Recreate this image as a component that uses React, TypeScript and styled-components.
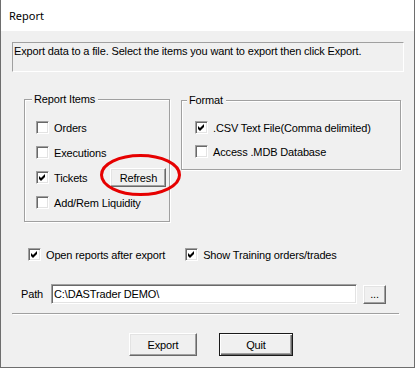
import React from 'react'
import styled, { createGlobalStyle } from 'styled-components'

const GlobalStyle = createGlobalStyle`
  html, body {
    margin: 0;
    padding: 0;
    background: #f0f0f0;
  }
`;

const Window = styled.div`
  width: 415px;
  height: 368px;
  box-sizing: border-box;
  display: flex;
  flex-direction: column;
  border: 1px solid #6e6e6e;
  border-top: none;
  background: #f0f0f0;
`;

const TitleBar = styled.div`
  flex: none;
  height: 31px;
  display: flex;
  align-items: center;
  padding-left: 8px;
  background: #fff;
  font-family: "Noto Sans", sans-serif;
  font-size: 11px;
  color: #000;
`;

const Client = styled.div`
  flex: 1;
  display: flex;
  flex-direction: column;
  padding: 11px 0 0 11px;
  font-family: "Liberation Sans", Arial, sans-serif;
  font-size: 11px;
  letter-spacing: -0.15px;
  color: #000;
`;

const Note = styled.div`
  width: 392px;
  height: 30px;
  box-sizing: border-box;
  border: 1px solid;
  border-color: #a0a0a0 #fff #fff #a0a0a0;
  padding: 2px 1px;
  line-height: 13px;
`;

const Groups = styled.div`
  display: flex;
  align-items: flex-start;
  gap: 11px;
  margin: 27px 0 0 12px;
`;

const Group = styled.div<{ $w: number; $h: number; $top?: number; $pt: number; $pl: number; $gap: number }>`
  position: relative;
  width: ${p => p.$w}px;
  height: ${p => p.$h}px;
  margin-top: ${p => p.$top ?? 0}px;
  box-sizing: border-box;
  border: 1px solid #a0a0a0;
  box-shadow: inset 1px 1px 0 #fff, 1px 1px 0 #fff;
  padding: ${p => p.$pt}px 1px 0 ${p => p.$pl}px;
  display: flex;
  flex-direction: column;
  gap: ${p => p.$gap}px;
`;

const Legend = styled.span<{ $left: number }>`
  position: absolute;
  top: -7px;
  left: ${p => p.$left}px;
  padding: 0 3px 0 2px;
  line-height: 13px;
  background: #f0f0f0;
`;

const Check = styled.label`
  display: flex;
  align-items: center;
  gap: 5px;
  height: 13px;
  white-space: nowrap;
`;

const Box = styled.span`
  flex: none;
  width: 13px;
  height: 13px;
  box-sizing: border-box;
  display: flex;
  align-items: center;
  justify-content: center;
  background: #fff;
  border: 1px solid;
  border-color: #a0a0a0 #fff #fff #a0a0a0;
  box-shadow: inset 1px 1px 0 #696969, inset -1px -1px 0 #e3e3e3;
`;

const Button = styled.button<{ $w: number; $h: number; $default?: boolean }>`
  flex: none;
  width: ${p => p.$w}px;
  height: ${p => p.$h}px;
  box-sizing: border-box;
  padding: 0;
  font: inherit;
  letter-spacing: inherit;
  color: #000;
  background: #f0f0f0;
  border: 1px solid;
  border-color: ${p => (p.$default ? '#1a1a1a' : '#fff #696969 #696969 #fff')};
  box-shadow: ${p =>
    p.$default
      ? 'inset 1px 1px 0 #fff, inset -1px -1px 0 #696969, inset -2px -2px 0 #a0a0a0'
      : 'inset -1px -1px 0 #a0a0a0, inset 1px 1px 0 #e3e3e3'};
`;

const RefreshSpot = styled.div`
  display: flex;
  align-items: center;
  height: 13px;
  position: relative;
`;

// the red ring marked over the screenshot
const Ring = styled.svg`
  position: absolute;
  left: 64px;
  top: -17px;
  z-index: 2;
  overflow: visible;
`;

const Options = styled.div`
  display: flex;
  gap: 20px;
  margin: 26px 0 0 16px;
`;

const PathRow = styled.div`
  display: flex;
  align-items: center;
  margin-top: 23px;
  padding-left: 9px;
`;

const PathInput = styled.div`
  width: 306px;
  height: 20px;
  margin: 0 6px 0 8px;
  box-sizing: border-box;
  display: flex;
  align-items: center;
  padding-left: 2px;
  background: #fff;
  border: 1px solid;
  border-color: #a0a0a0 #fff #fff #a0a0a0;
  box-shadow: inset 1px 1px 0 #696969, inset -1px -1px 0 #e3e3e3;
`;

const Separator = styled.div`
  width: 387px;
  height: 1px;
  margin-top: 9px;
  background: #a0a0a0;
  box-shadow: 1px 1px 0 #fff;
`;

const ButtonRow = styled.div`
  display: flex;
  gap: 22px;
  margin: 19px 0 0 117px;
`;

const Tick = () => (
  <svg width="7" height="7" viewBox="0 0 7 7">
    <polygon points="0,2 2,4 6,0 6,3 2,7 0,5" fill="#000" />
  </svg>
);

const CheckBox = ({ label, on }: { label: string; on?: boolean }) => (
  <Check>
    <Box>{on && <Tick />}</Box>
    {label}
  </Check>
);

export default function App() {
  return (
    <>
      <GlobalStyle />
      <Window>
        <TitleBar>Report</TitleBar>
        <Client>
          <Note>Export data to a file. Select the items you want to export then click Export.</Note>

          <Groups>
            <Group $w={146} $h={123} $pt={21} $pl={11} $gap={12}>
              <Legend $left={7}>Report Items</Legend>
              <CheckBox label="Orders" />
              <CheckBox label="Executions" />
              <RefreshSpot>
                <CheckBox label="Tickets" on />
                <Button $w={56} $h={19} style={{ marginLeft: 23 }}>Refresh</Button>
                <Ring width="81" height="42" viewBox="0 0 81 42">
                  <ellipse cx="40.5" cy="21" rx="39" ry="19.5" fill="none" stroke="#e60000" strokeWidth="3" />
                </Ring>
              </RefreshSpot>
              <CheckBox label="Add/Rem Liquidity" />
            </Group>

            <Group $w={220} $h={70} $top={1} $pt={20} $pl={13} $gap={11}>
              <Legend $left={5}>Format</Legend>
              <CheckBox label=".CSV Text File(Comma delimited)" on />
              <CheckBox label="Access .MDB Database" />
            </Group>
          </Groups>

          <Options>
            <CheckBox label="Open reports after export" on />
            <CheckBox label="Show Training orders/trades" on />
          </Options>

          <PathRow>
            Path
            <PathInput>C:\DASTrader DEMO\</PathInput>
            <Button $w={23} $h={19}>...</Button>
          </PathRow>

          <Separator />

          <ButtonRow>
            <Button $w={68} $h={23}>Export</Button>
            <Button $w={74} $h={23} $default>Quit</Button>
          </ButtonRow>
        </Client>
      </Window>
    </>
  )
}
